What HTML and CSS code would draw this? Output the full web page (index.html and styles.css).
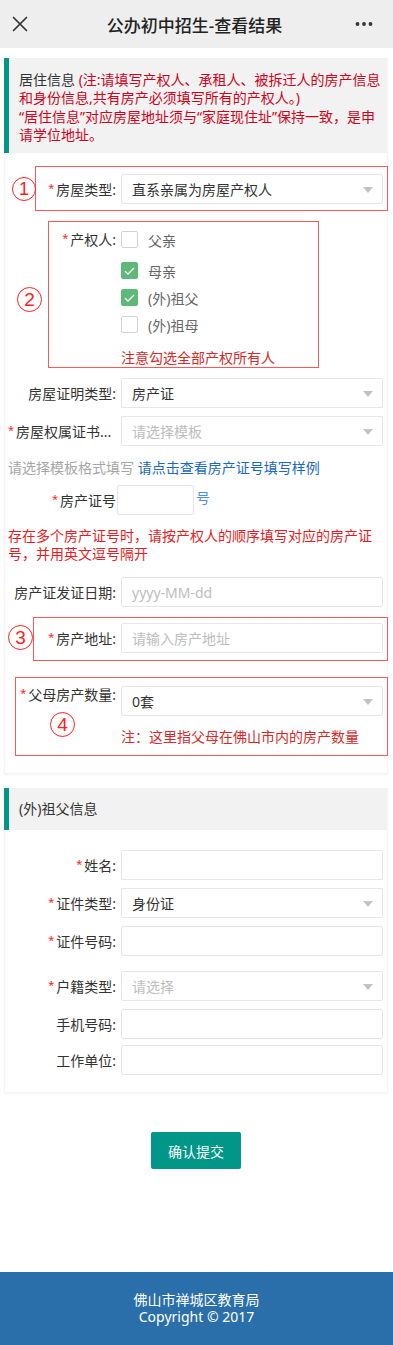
FILE: index.html
```html
<!DOCTYPE html>
<html lang="zh-CN">
<head>
<meta charset="utf-8">
<meta name="viewport" content="width=393">
<title>公办初中招生-查看结果</title>
<link rel="stylesheet" href="styles.css">
</head>
<body>
<header class="topbar">
  <svg class="topbar-close" width="16" height="16" viewBox="0 0 16 16"><path d="M1.5 1.5L14.5 14.5M14.5 1.5L1.5 14.5" stroke="#333" stroke-width="1.7" fill="none" stroke-linecap="round"/></svg>
  <div class="topbar-title">公办初中招生-查看结果</div>
  <svg class="topbar-more" width="18" height="6" viewBox="0 0 18 6"><circle cx="2.5" cy="3" r="1.9" fill="#333"/><circle cx="9" cy="3" r="1.9" fill="#333"/><circle cx="15.5" cy="3" r="1.9" fill="#333"/></svg>
</header>

<main class="page">
  <section class="card card-first">
    <div class="card-head card-head-tall">
      <span>居住信息 </span><span class="head-red">(注:请填写产权人、承租人、被拆迁人的房产信息<br>和身份信息,共有房产必须填写所有的产权人。)<br>“居住信息”对应房屋地址须与“家庭现住址”保持一致，是申<br>请学位地址。</span>
    </div>
    <div class="card-body card-body-first">
      <div class="row mark mark-1">
        <span class="circle circle-1">1</span>
        <label class="label"><i class="req">*</i>房屋类型:</label>
        <div class="ctl select"><span class="val">直系亲属为房屋产权人</span><span class="arrow"></span></div>
      </div>

      <div class="row row-top mark mark-2">
        <span class="circle circle-2">2</span>
        <label class="label label-cb"><i class="req">*</i>产权人:</label>
        <div class="cb-list">
          <div class="cb-item cb-item-first"><span class="cb"></span><span class="cb-text">父亲</span></div>
          <div class="cb-item"><span class="cb cb-on"><svg width="11" height="8" viewBox="0 0 11 8"><path d="M1 4.2L4 7L10 1" stroke="#fff" stroke-width="1.3" fill="none"/></svg></span><span class="cb-text">母亲</span></div>
          <div class="cb-item"><span class="cb cb-on"><svg width="11" height="8" viewBox="0 0 11 8"><path d="M1 4.2L4 7L10 1" stroke="#fff" stroke-width="1.3" fill="none"/></svg></span><span class="cb-text">(外)祖父</span></div>
          <div class="cb-item"><span class="cb"></span><span class="cb-text">(外)祖母</span></div>
          <div class="note note-cb">注意勾选全部产权所有人</div>
        </div>
      </div>

      <div class="row">
        <label class="label">房屋证明类型:</label>
        <div class="ctl select"><span class="val">房产证</span><span class="arrow"></span></div>
      </div>
      <div class="row">
        <label class="label label-long"><i class="req">*</i>房屋权属证书...</label>
        <div class="ctl select"><span class="val ph">请选择模板</span><span class="arrow"></span></div>
      </div>
      <div class="hint"><span class="hint-gray">请选择模板格式填写 </span><span class="hint-link">请点击查看房产证号填写样例</span></div>
      <div class="row row-cert">
        <label class="label label-cert"><i class="req">*</i>房产证号</label>
        <div class="ctl ctl-short"></div>
        <span class="cert-suffix">号</span>
      </div>
      <div class="warn">存在多个房产证号时，请按产权人的顺序填写对应的房产证号，并用英文逗号隔开</div>
      <div class="row row-date">
        <label class="label">房产证发证日期:</label>
        <div class="ctl"><span class="val ph">yyyy-MM-dd</span></div>
      </div>
      <div class="row row-addr mark mark-3">
        <span class="circle circle-3">3</span>
        <label class="label"><i class="req">*</i>房产地址:</label>
        <div class="ctl"><span class="val ph">请输入房产地址</span></div>
      </div>
      <div class="mark mark-4 house-count">
        <span class="circle circle-4">4</span>
        <div class="row row-top row-count">
          <label class="label label-count"><i class="req">*</i>父母房产数量:</label>
          <div class="ctl select"><span class="val">0套</span><span class="arrow"></span></div>
        </div>
        <div class="note note-count">注：这里指父母在佛山市内的房产数量</div>
      </div>
    </div>
  </section>

  <section class="card card-second">
    <div class="card-head">(外)祖父信息</div>
    <div class="card-body card-body-second">
      <div class="row">
        <label class="label"><i class="req">*</i>姓名:</label>
        <div class="ctl"></div>
      </div>
      <div class="row">
        <label class="label"><i class="req">*</i>证件类型:</label>
        <div class="ctl select"><span class="val">身份证</span><span class="arrow"></span></div>
      </div>
      <div class="row row-idno">
        <label class="label"><i class="req">*</i>证件号码:</label>
        <div class="ctl"></div>
      </div>
      <div class="row">
        <label class="label"><i class="req">*</i>户籍类型:</label>
        <div class="ctl select"><span class="val ph">请选择</span><span class="arrow"></span></div>
      </div>
      <div class="row row-phone">
        <label class="label">手机号码:</label>
        <div class="ctl"></div>
      </div>
      <div class="row row-last">
        <label class="label">工作单位:</label>
        <div class="ctl"></div>
      </div>
    </div>
  </section>

  <div class="actions">
    <button class="btn-submit" type="button">确认提交</button>
  </div>
</main>

<footer class="footer">
  <div>佛山市禅城区教育局</div>
  <div>Copyright © 2017</div>
</footer>
</body>
</html>
```

FILE: styles.css
```css
* { box-sizing: border-box; }
html, body { margin: 0; padding: 0; }
body {
  width: 393px;
  background: #fff;
  font-family: "Noto Sans", "Noto Sans CJK SC", sans-serif;
  font-size: 14px;
  color: #333;
}

.topbar {
  height: 48px;
  background: #eeeeee;
  display: flex;
  align-items: center;
  justify-content: space-between;
  padding: 0 20px 0 12px;
}
.topbar-close { display: block; }
.topbar-title {
  font-size: 17px;
  color: #222;
  font-weight: 500;
  margin-left: 6px;
}
.topbar-more { display: block; }

.page { padding: 10px 5px 0 4px; }

.card {
  border: 1px solid #f4f4f4;
  border-top: none;
  box-shadow: 0 1px 2px rgba(0,0,0,0.04);
}
.card-second { margin-top: 14px; }

.card-head {
  background: #f2f2f2;
  border-left: 5px solid #009688;
  padding: 0 6px 0 10px;
  height: 42px;
  line-height: 42px;
  color: #333;
  margin-left: -1px;
}
.card-head-tall {
  height: auto;
  line-height: 18.33px;
  padding: 13px 4px 9px 10px;
  white-space: nowrap;
}
.head-red { color: #d0021b; }

.card-body { padding: 0 4px 0 3px; }
.card-body-first { padding-top: 21px; padding-bottom: 26px; }
.card-body-second { padding-top: 20px; padding-bottom: 17px; }

.row {
  display: flex;
  align-items: center;
  margin-bottom: 8px;
}
.row-top { align-items: flex-start; }

.label {
  width: 113px;
  flex: none;
  padding-right: 5px;
  text-align: right;
  white-space: nowrap;
  color: #333;
  font-size: 14px;
}
.req {
  font-style: normal;
  color: #ff2222;
  font-size: 11px;
  position: relative;
  top: -3px;
  margin-right: 2px;
}
.label-long { padding-right: 12px; letter-spacing: 0; }

.ctl {
  flex: 1;
  height: 30px;
  border: 1px solid #e6e6e6;
  border-radius: 2px;
  background: #fff;
  display: flex;
  align-items: center;
  padding: 0 9px 0 10px;
}
.val { flex: 1; color: #333; font-size: 14px; }
.ph { color: #bdbdbd; }
.arrow {
  width: 0;
  height: 0;
  border-left: 5.5px solid transparent;
  border-right: 5.5px solid transparent;
  border-top: 6px solid #c2c2c2;
  margin-top: 2px;
}

.mark { position: relative; }
.mark::before {
  content: "";
  position: absolute;
  border: 1.5px solid #f65a5a;
  pointer-events: none;
}
.mark-1 { margin-bottom: 22px; }
.mark-1::before { top: -8px; bottom: -7px; left: 27px; right: -5px; }
.mark-2 { margin-bottom: 10px; }
.mark-2::before { top: -5px; bottom: 0; left: 40px; right: 64px; }
.mark-3::before { top: -6px; bottom: -8px; left: 25px; right: -5px; }
.mark-4::before { top: -9px; bottom: -9px; left: 7px; right: -5px; }

.circle {
  position: absolute;
  border: 1.5px solid #ff2020;
  border-radius: 50%;
  color: #ff2020;
  display: flex;
  align-items: center;
  justify-content: center;
  font-family: "Liberation Sans", sans-serif;
  line-height: 1;
}
.circle-1 { width: 24px; height: 24px; left: 4px; top: 3px; font-size: 18px; }
.circle-2 { width: 25px; height: 25px; left: 9px; top: 61px; font-size: 19px; }
.circle-3 { width: 25px; height: 25px; left: 0; top: 2px; font-size: 19px; }
.circle-4 { width: 25px; height: 25px; left: 42px; top: 26px; font-size: 19px; }

.label-cb { line-height: 27px; }
.cb-list { display: flex; flex-direction: column; }
.cb-item {
  height: 27px;
  display: flex;
  align-items: center;
}
.cb-item-first { margin-bottom: 4px; }
.cb {
  width: 17px;
  height: 17px;
  border: 1px solid #d2d2d2;
  border-radius: 2px;
  background: #fff;
  display: flex;
  align-items: center;
  justify-content: center;
  margin-right: 10px;
}
.cb-on { background: #5fb878; border-color: #5fb878; }
.cb-text { color: #666; font-size: 14px; }

.note {
  color: #d42a2a;
  font-size: 14px;
  line-height: 20px;
}
.note-cb { margin-top: 10px; }

.hint {
  margin-top: 12px;
  line-height: 20px;
  font-size: 14px;
}
.hint-gray { color: #a6a6a6; }
.hint-link { color: #1a68bf; }

.row-cert { margin-top: 7px; margin-bottom: 0; }
.label-cert { width: 109px; padding-right: 1px; }
.ctl-short { flex: none; width: 77px; }
.cert-suffix { color: #4a90e2; margin-left: 2px; margin-top: -6px; }

.warn {
  margin-top: 12px;
  color: #e51c23;
  font-size: 14px;
  line-height: 18px;
}

.row-date { margin-top: 14px; margin-bottom: 16px; }
.row-addr { margin-bottom: 33px; }
.row-count { margin-bottom: 0; }
.label-count { line-height: 17px; }
.note-count { margin-top: 11px; margin-left: 113px; }

.row-idno { margin-bottom: 15px; }
.row-phone { margin-bottom: 6px; }
.row-last { margin-bottom: 0; }

.actions {
  display: flex;
  justify-content: center;
  padding-top: 39px;
  padding-bottom: 103px;
}
.btn-submit {
  width: 90px;
  height: 37px;
  border: none;
  border-radius: 2px;
  background: #009688;
  color: #fff;
  font-family: "Noto Sans", "Noto Sans CJK SC", sans-serif;
  font-size: 14px;
  padding: 0;
}

.footer {
  height: 73px;
  background: #2a6fa9;
  color: #fff;
  text-align: center;
  font-size: 14px;
  line-height: 16.5px;
  padding-top: 20px;
}
```
